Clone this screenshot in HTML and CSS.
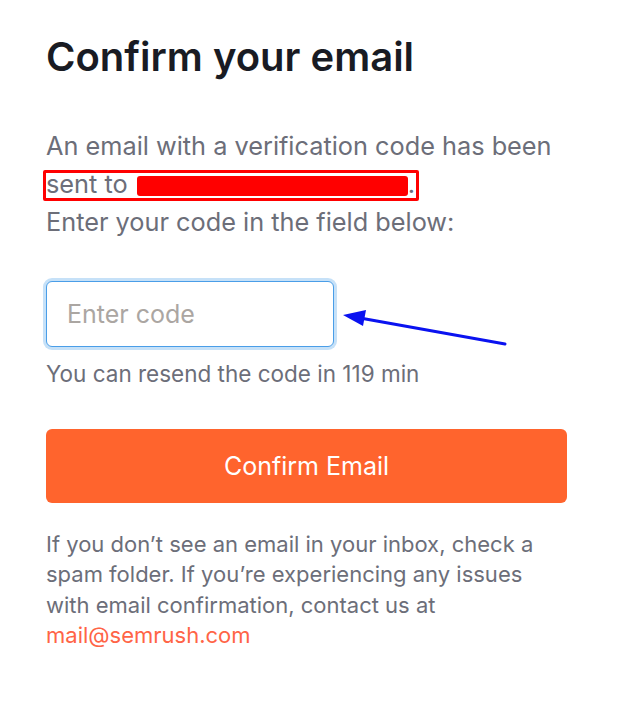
FILE: index.html
```html
<!DOCTYPE html>
<html lang="en">
<head>
    <meta charset="UTF-8">
    <meta name="viewport" content="width=device-width, initial-scale=1.0">
    <title>Confirm your email</title>
    <link rel="stylesheet" href="styles.css">
</head>
<body>

    <div class="page">
        <h1>Confirm your email</h1>

        <p class="intro">
            An email with a verification code has been
            sent to <span class="redacted"></span>.<br>
            Enter your code in the field below:
            <span class="mark-box"></span>
        </p>

        <div class="field">
            <input type="text" class="code-input" placeholder="Enter code">
            <svg class="arrow" width="180" height="50" viewBox="0 0 180 50">
                <line x1="165" y1="42" x2="20" y2="16" stroke="#0a12f0" stroke-width="3" stroke-linecap="round"/>
                <polygon points="3,13 26,8 23,24" fill="#0a12f0"/>
            </svg>
        </div>

        <p class="resend">You can resend the code in 119 min</p>

        <button class="confirm-btn">Confirm Email</button>

        <p class="help">
            If you don’t see an email in your inbox, check a
            spam folder. If you’re experiencing any issues
            with email confirmation, contact us at
            <a href="#">mail@semrush.com</a>
        </p>
    </div>

</body>
</html>
```

FILE: styles.css
```css
body {
    margin: 0;
    background: #fff;
    font-family: Inter, "Noto Sans", sans-serif;
}
.page {
    width: 521px;
    padding: 34px 0 0 46px;
}
h1 {
    margin: 0;
    font-size: 40px;
    line-height: 46px;
    font-weight: 600;
    color: #191b23;
}
.intro {
    position: relative;
    margin: 47px 0 0;
    font-size: 25.3px;
    line-height: 38px;
    color: #6c6e79;
}
.redacted {
    display: inline-block;
    width: 271px;
    height: 20px;
    margin-left: 2px;
    vertical-align: -3px;
    background: #ff0000;
    border-radius: 3px;
}
.mark-box {
    position: absolute;
    left: -3px;
    top: 43px;
    width: 370px;
    height: 25px;
    border: 3px solid #ff0000;
    border-radius: 2px;
}
.field {
    position: relative;
    margin-top: 40px;
}
.code-input {
    box-sizing: border-box;
    width: 288px;
    height: 66px;
    margin: 0;
    padding: 0 20px;
    border: 1px solid #4a9ee8;
    border-radius: 6px;
    box-shadow: 0 0 0 3px #c6e1f8;
    outline: none;
    font-family: inherit;
    font-size: 25px;
    color: #191b23;
}
.code-input::placeholder {
    color: #aba6a2;
}
.arrow {
    position: absolute;
    left: 294px;
    top: 21px;
}
.resend {
    margin: 12px 0 0;
    font-size: 22.5px;
    line-height: 30px;
    color: #6c6e79;
}
.confirm-btn {
    display: block;
    width: 521px;
    height: 74px;
    margin-top: 40px;
    border: none;
    border-radius: 6px;
    background: #ff642d;
    color: #fff;
    font-family: inherit;
    font-size: 25px;
    cursor: pointer;
}
.help {
    margin: 26px 0 0;
    font-size: 22px;
    line-height: 30.4px;
    color: #6c6e79;
}
.help a {
    color: #ff6446;
    text-decoration: none;
}
```
